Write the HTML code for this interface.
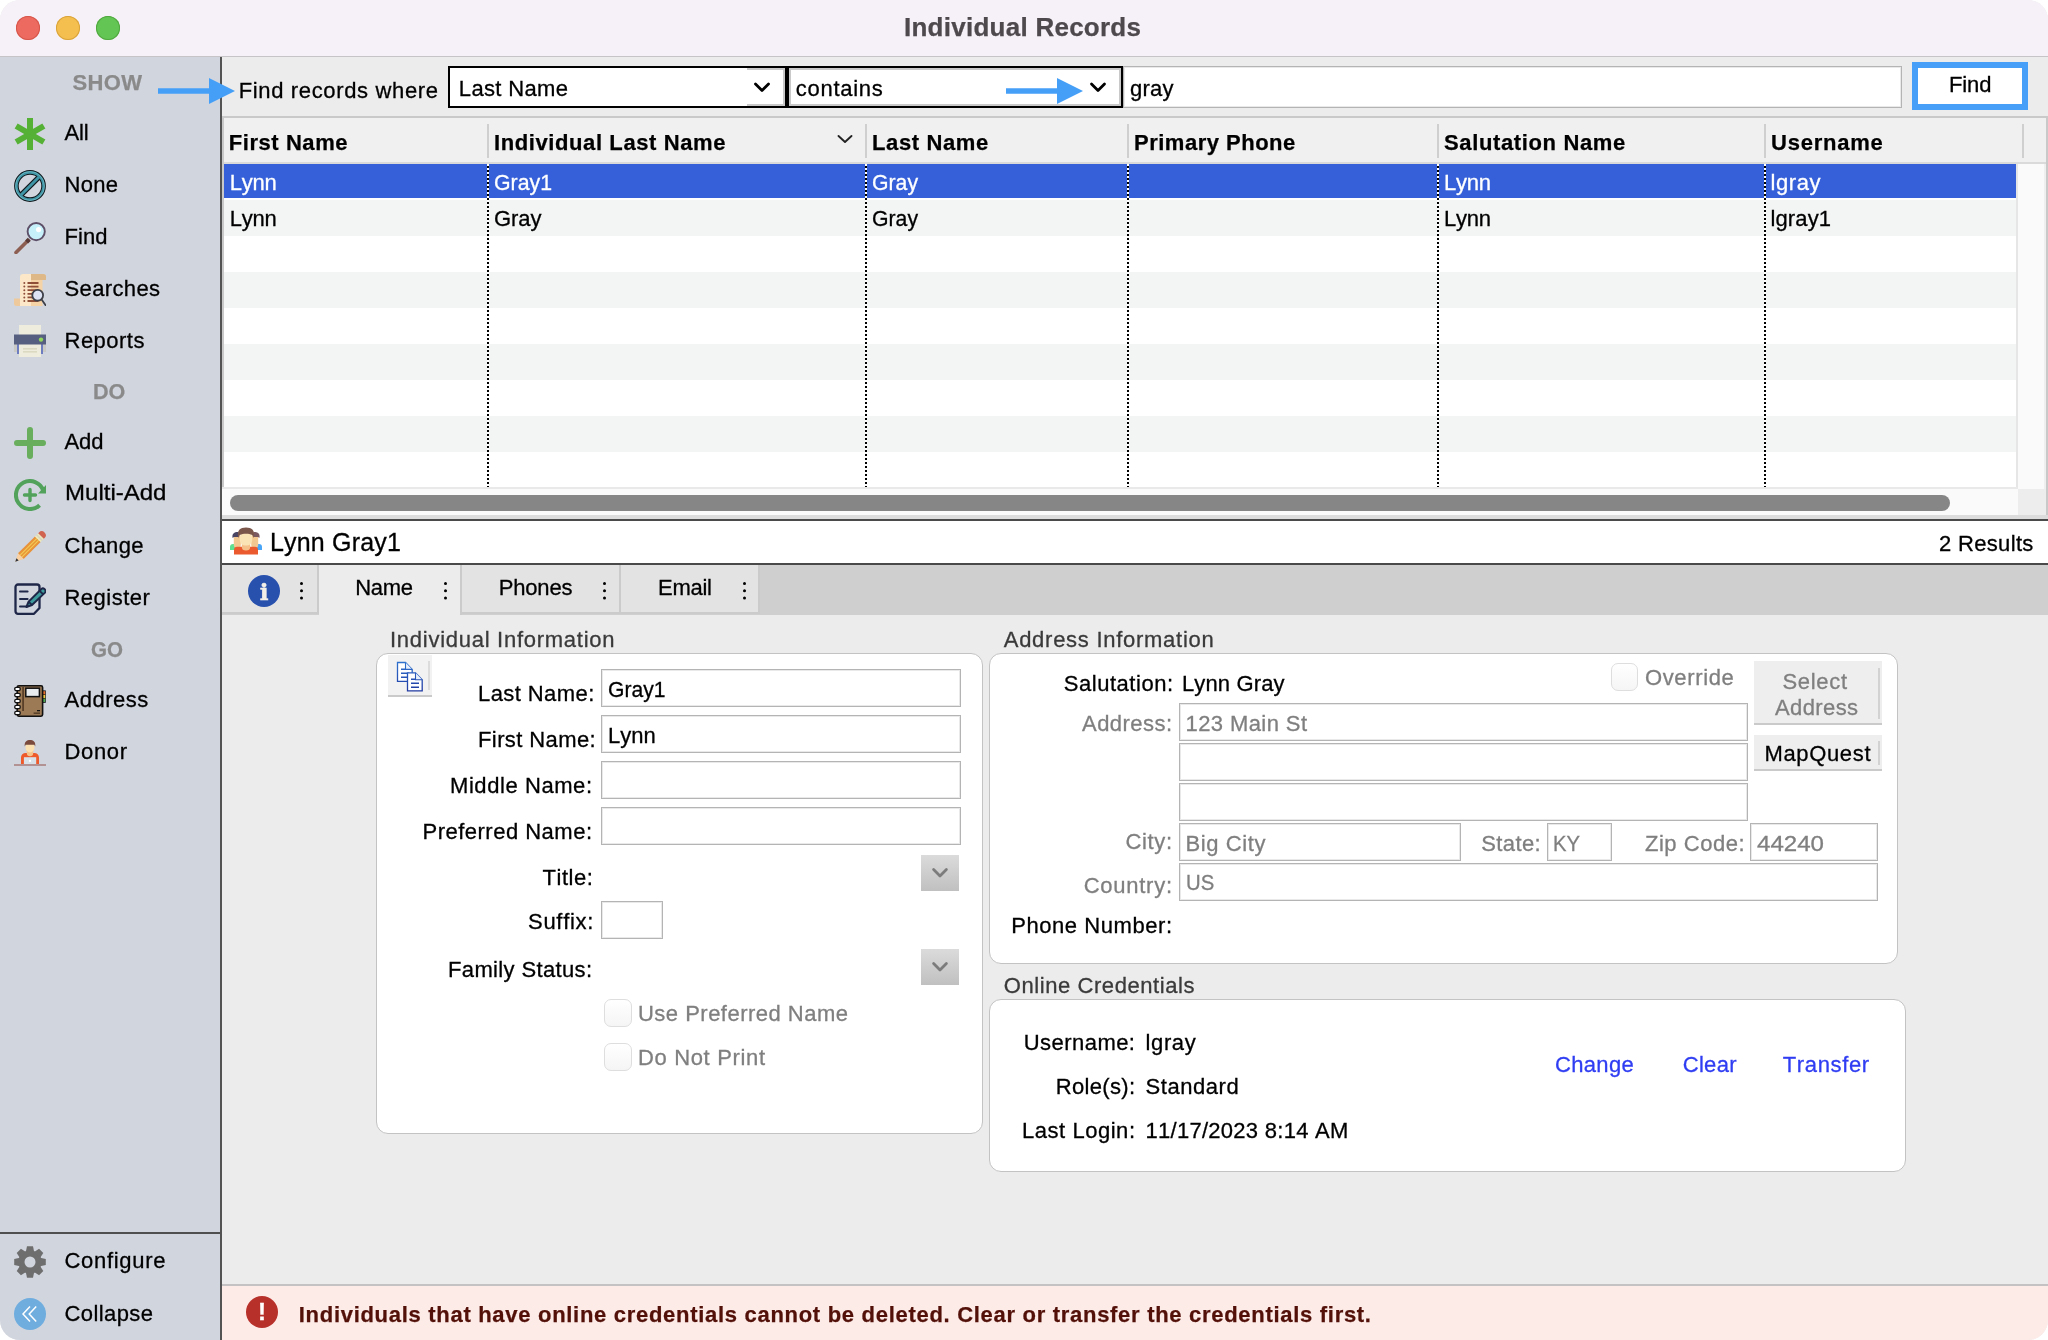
<!DOCTYPE html>
<html lang="en">
<head>
<meta charset="utf-8">
<title>Individual Records</title>
<style>
*{box-sizing:border-box;margin:0;padding:0}
html,body{width:2048px;height:1340px;background:#fff;overflow:hidden}
body{font-family:"Liberation Sans",sans-serif;font-kerning:none;color:#000;position:relative}
#win{position:absolute;left:0;top:0;width:2048px;height:1340px;border-radius:20px;overflow:hidden;background:#ececec}
.a{position:absolute}
.t{position:absolute;white-space:nowrap;font-kerning:none;-webkit-text-stroke:0.3px}
#txt{position:absolute;left:0;top:0;width:2048px;height:1340px;will-change:transform}
#titlebar{left:0;top:0;width:2048px;height:56px;background:#f6f1f8}
#tbline{left:0;top:56px;width:2048px;height:1px;background:#c6c4c6}
.tl{width:24px;height:24px;border-radius:50%;top:16px}
#sidebar{left:0;top:57px;width:220px;height:1283px;background:#d1d5de}
#divider{left:220px;top:57px;width:2px;height:1283px;background:#535353}
#sideline{left:0;top:1232px;width:220px;height:2px;background:#4f4f4f}
.ic{position:absolute;left:14px;width:32px;height:32px}
.combo{background:#fff;border:2px solid #000;height:42px;top:66px}
.inp{position:absolute;background:#fff;border:1px solid #b4b4b4;box-shadow:inset 0 0 0 1px #e9e9e9}
.grp{position:absolute;background:#fff;border:1.5px solid #c3c3c3;border-radius:12px}
.row{position:absolute;left:224px;width:1792px;height:36px}
.vd{position:absolute;top:164px;width:2px;height:323px;background:repeating-linear-gradient(to bottom,#fff 0,#fff 2px,#000 2px,#000 4px)}
.hs{position:absolute;top:124px;width:2px;height:34px;background:#cfcfcf}
.tab{position:absolute;top:565px;height:49px;background:#e3e3e3;border-right:2px solid #cbcbcb;border-bottom:2px solid #cbcbcb}
.dots{position:absolute;width:3px;height:3px;margin:0.3px 0 0 0.3px;background:#000;border-radius:50%;box-shadow:0 7.3px 0 #000,0 14.6px 0 #000}
.cb{position:absolute;width:27.5px;height:27.5px;border:1.5px solid #dedede;border-radius:7px;background:linear-gradient(#fff,#f5f5f5)}
.btn{position:absolute;background:#eeeeee;border-bottom:2px solid #cacaca}
.dd{position:absolute;width:38px;height:36px;background:linear-gradient(#dbdbdb,#c0c0c0)}
</style>
</head>
<body>
<div id="win">
<div id="titlebar" class="a"></div>
<div id="tbline" class="a"></div>
<div class="a tl" style="left:16px;background:#ec6a5f;box-shadow:inset 0 0 0 1px #d5564b"></div>
<div class="a tl" style="left:56px;background:#f5bf4f;box-shadow:inset 0 0 0 1px #d9a33c"></div>
<div class="a tl" style="left:96px;background:#62c554;box-shadow:inset 0 0 0 1px #51a73f"></div>

<div id="sidebar" class="a"></div>
<div id="divider" class="a"></div>
<div id="sideline" class="a"></div>

<!-- find bar -->
<div class="a" style="left:222px;top:116px;width:1824px;height:2px;background:#c9c9c9"></div>
<div class="a combo" style="left:448px;width:339px"></div>
<div class="a" style="left:747px;top:68px;width:38px;height:38px;border:2px solid #c9c9c9;border-left:none"></div>
<div class="a combo" style="left:787px;width:336px;box-shadow:inset 0 0 0 2px #c9c9c9"></div>
<div class="inp" style="left:1123px;top:66px;width:779px;height:42px"></div>
<div class="a" style="left:1912px;top:62px;width:116px;height:48px;background:#fff;border:6px solid #479ff8"></div>
<svg class="a" style="left:750px;top:78px" width="24" height="18" viewBox="0 0 24 18"><path d="M5.5 6 L12 12.5 L18.5 6" fill="none" stroke="#000" stroke-width="2.8" stroke-linecap="round" stroke-linejoin="round"/></svg>
<svg class="a" style="left:1086px;top:78px" width="24" height="18" viewBox="0 0 24 18"><path d="M5.5 6 L12 12.5 L18.5 6" fill="none" stroke="#000" stroke-width="2.8" stroke-linecap="round" stroke-linejoin="round"/></svg>
<!-- blue arrows -->
<svg class="a" style="left:150px;top:74px" width="90" height="34" viewBox="0 0 90 34"><path d="M8 14.2 H59 V4 L85 17 L59 30 V19.800 H8 Z" fill="#469ff7"/></svg>
<svg class="a" style="left:998px;top:74px" width="90" height="34" viewBox="0 0 90 34"><path d="M8 14.2 H59 V4 L85 17 L59 30 V19.800 H8 Z" fill="#469ff7"/></svg>

<!-- table -->
<div class="a" style="left:222px;top:118px;width:1824px;height:44px;background:#f0f0f0"></div>
<div class="a" style="left:222px;top:162px;width:1824px;height:2px;background:#dadada"></div>
<div class="a" style="left:2046px;top:116px;width:2px;height:402px;background:#c9c9c9"></div>
<div class="a" style="left:222px;top:116px;width:2px;height:402px;background:#c9c9c9"></div>
<div class="a" style="left:224px;top:164px;width:1792px;height:323px;background:#fff"></div>
<div class="row" style="top:164px;height:34px;background:#3560d9"></div>
<div class="row" style="top:200px;background:#f3f5f4"></div>
<div class="row" style="top:272px;background:#f3f5f4"></div>
<div class="row" style="top:344px;background:#f3f5f4"></div>
<div class="row" style="top:416px;background:#f3f5f4"></div>
<div class="a" style="left:2016px;top:164px;width:30px;height:354px;background:#fafafa;border-left:2px solid #e6e6e6"></div>
<div class="a" style="left:222px;top:487px;width:1796px;height:31px;background:#fafafa;border-top:2px solid #e9e9e9"></div>
<div class="a" style="left:2018px;top:489px;width:28px;height:29px;background:#ededed"></div>
<div class="a" style="left:2044px;top:164px;width:2px;height:325px;background:#efefef"></div>
<div class="a" style="left:230px;top:495px;width:1720px;height:16px;border-radius:8px;background:#868686"></div>
<div class="a" style="left:222px;top:515px;width:1826px;height:4px;background:#dcdcdc"></div>
<div class="hs" style="left:487px"></div><div class="hs" style="left:865px"></div><div class="hs" style="left:1127px"></div>
<div class="hs" style="left:1437px"></div><div class="hs" style="left:1764px"></div><div class="hs" style="left:2022px"></div>
<div class="vd" style="left:487px"></div><div class="vd" style="left:865px"></div><div class="vd" style="left:1127px"></div>
<div class="vd" style="left:1437px"></div><div class="vd" style="left:1764px"></div>
<svg class="a" style="left:834px;top:130px" width="22" height="18" viewBox="0 0 22 18"><path d="M4.5 6 L11 12 L17.5 6" fill="none" stroke="#222" stroke-width="1.9" stroke-linecap="round" stroke-linejoin="round"/></svg>

<!-- name bar -->
<div class="a" style="left:222px;top:519px;width:1826px;height:2px;background:#4a4a4a"></div>
<div class="a" style="left:222px;top:521px;width:1826px;height:42px;background:#fff"></div>
<div class="a" style="left:222px;top:563px;width:1826px;height:2px;background:#4a4a4a"></div>

<!-- tabs -->
<div class="a" style="left:222px;top:565px;width:1826px;height:50px;background:#cfcfcf"></div>
<div class="tab" style="left:222px;width:97px"></div>
<div class="tab" style="left:319px;width:143px;background:#ececec;border-bottom:none;height:50px"></div>
<div class="tab" style="left:462px;width:159px"></div>
<div class="tab" style="left:621px;width:139px"></div>
<div class="dots" style="left:300px;top:581.7px"></div>
<div class="dots" style="left:444px;top:581.7px"></div>
<div class="dots" style="left:603px;top:581.7px"></div>
<div class="dots" style="left:743px;top:581.7px"></div>
<svg class="a" style="left:248px;top:575px;will-change:transform" width="32" height="32" viewBox="0 0 32 32"><circle cx="16" cy="16" r="16" fill="#2851ae"/><text x="16.2" y="24.700" font-family="DejaVu Serif,Liberation Serif,serif" font-weight="bold" font-size="23" fill="#f2efe8" stroke="#f2efe8" stroke-width="0.5" text-anchor="middle">i</text></svg>

<!-- groups -->
<div class="grp" style="left:376px;top:653px;width:607px;height:481px"></div>
<div class="grp" style="left:989px;top:653px;width:909px;height:311px"></div>
<div class="grp" style="left:989px;top:999px;width:917px;height:173px"></div>

<!-- individual form -->
<div class="btn" style="left:388px;top:655px;width:44px;height:42px;background:#f2f2f2"></div>
<div class="a" style="left:428px;top:661px;width:2px;height:29px;background:#dcdcdc"></div>
<div class="inp" style="left:601px;top:669px;width:360px;height:38px"></div>
<div class="inp" style="left:601px;top:715px;width:360px;height:38px"></div>
<div class="inp" style="left:601px;top:761px;width:360px;height:38px"></div>
<div class="inp" style="left:601px;top:807px;width:360px;height:38px"></div>
<div class="inp" style="left:601px;top:901px;width:62px;height:38px"></div>
<div class="dd" style="left:921px;top:855px"></div>
<div class="dd" style="left:921px;top:949px"></div>
<svg class="a" style="left:929px;top:863px" width="22" height="18" viewBox="0 0 22 18"><path d="M4.600 6.600 L11 13 L17.400 6.600" fill="none" stroke="#7c7c7c" stroke-width="2.800" stroke-linecap="round" stroke-linejoin="round"/></svg>
<svg class="a" style="left:929px;top:956.500px" width="22" height="18" viewBox="0 0 22 18"><path d="M4.600 6.600 L11 13 L17.400 6.600" fill="none" stroke="#7c7c7c" stroke-width="2.800" stroke-linecap="round" stroke-linejoin="round"/></svg>
<div class="cb" style="left:604px;top:999px"></div>
<div class="cb" style="left:604px;top:1043px"></div>

<!-- address form -->
<div class="cb" style="left:1610.5px;top:663px"></div>
<div class="inp" style="left:1179px;top:703px;width:569px;height:38px"></div>
<div class="inp" style="left:1179px;top:743px;width:569px;height:38px"></div>
<div class="inp" style="left:1179px;top:783px;width:569px;height:38px"></div>
<div class="inp" style="left:1179px;top:823px;width:282px;height:38px"></div>
<div class="inp" style="left:1547px;top:823px;width:65px;height:38px"></div>
<div class="inp" style="left:1750px;top:823px;width:128px;height:38px"></div>
<div class="inp" style="left:1179px;top:863px;width:699px;height:38px"></div>
<div class="btn" style="left:1754px;top:661px;width:128px;height:64px"></div>
<div class="a" style="left:1878px;top:668px;width:2px;height:51px;background:#d2d2d2"></div>
<div class="btn" style="left:1754px;top:735px;width:128px;height:36px"></div>
<div class="a" style="left:1878px;top:741px;width:2px;height:24px;background:#d2d2d2"></div>

<!-- error bar -->
<div class="a" style="left:222px;top:1284px;width:1826px;height:2px;background:#c4c2c2"></div>
<div class="a" style="left:222px;top:1286px;width:1826px;height:54px;background:#fdebe8"></div>
<svg class="a" style="left:246px;top:1296px;will-change:transform" width="32" height="32" viewBox="0 0 32 32"><circle cx="16" cy="16" r="16" fill="#b8302a"/><text x="16" y="24.4" font-family="Liberation Sans,sans-serif" font-weight="bold" font-size="24" fill="#fff" stroke="#fff" stroke-width="0.35" stroke-linejoin="round" text-anchor="middle">!</text></svg>

<!-- sidebar icons -->
<svg class="ic" style="top:118px" viewBox="0 0 32 32"><g fill="#55b135"><rect x="13" y="0" width="6" height="32"/><rect x="13" y="0" width="6" height="32" transform="rotate(60 16 16)"/><rect x="13" y="0" width="6" height="32" transform="rotate(-60 16 16)"/></g></svg>
<svg class="ic" style="top:170px" viewBox="0 0 32 32"><circle cx="16" cy="16" r="13.6" fill="none" stroke="#10181c" stroke-width="4.6"/><path d="M6.8 25.2 L25.2 6.8" stroke="#10181c" stroke-width="5.2"/><circle cx="16" cy="16" r="13.6" fill="none" stroke="#3f95a5" stroke-width="2.6"/><path d="M7 25 L25 7" stroke="#3f95a5" stroke-width="3"/><circle cx="16" cy="16" r="14.4" fill="none" stroke="#9fd8e0" stroke-width="0.6" opacity=".7"/></svg>
<svg class="ic" style="top:222px" viewBox="0 0 32 32"><path d="M14 18.6 L2 30.6" stroke="#8d5f52" stroke-width="3.6" stroke-linecap="round"/><path d="M15.3 17.3 L12.6 20" stroke="#5a3a36" stroke-width="4.2"/><circle cx="22.2" cy="9.6" r="8.6" fill="#c6f1fb" stroke="#5d5068" stroke-width="1.9"/><circle cx="24.6" cy="7.6" r="2.6" fill="#fff"/></svg>
<svg class="ic" style="top:274px" viewBox="0 0 32 32"><path d="M9 0 H17 V32 H3 V26 H6 V3 a3 3 0 0 1 3 -3 Z" fill="#fce8c9"/><rect x="17" y="0" width="11.5" height="32" fill="#f6d3a6"/><path d="M17 0 H29.5 a2.5 2.5 0 0 1 2.5 2.5 V6 H17 Z" fill="#deb887"/><path d="M0 24.5 H6 V32 H2.5 A2.5 2.5 0 0 1 0 29.5 Z" fill="#eec99b"/><g stroke="#8e4e38" stroke-width="1.8"><path d="M13.5 9 H24.5 M13.5 12.6 H24.5 M13.5 16.2 H24.5 M13.5 19.8 H24.5 M13.5 23.4 H24.5 M13.5 27 H24.5"/></g><g fill="#8e4e38"><circle cx="10.3" cy="9" r="1"/><circle cx="10.3" cy="12.6" r="1"/><circle cx="10.3" cy="16.2" r="1"/><circle cx="10.3" cy="19.8" r="1"/><circle cx="10.3" cy="23.4" r="1"/><circle cx="10.3" cy="27" r="1"/></g><path d="M27.6 25.6 L31.6 31.2" stroke="#3d4048" stroke-width="1.8" stroke-linecap="round"/><circle cx="23.7" cy="21.2" r="5.4" fill="#dde3f3" stroke="#3d4048" stroke-width="1.8"/></svg>
<svg class="ic" style="top:325px" viewBox="0 0 32 32"><rect x="5" y="0" width="22" height="11" fill="#eeecdc"/><rect x="0" y="19" width="3.6" height="8" fill="#c9c9c5"/><rect x="28.4" y="19" width="3.6" height="8" fill="#c9c9c5"/><rect x="3" y="19" width="2.2" height="10" fill="#6e7cc0"/><rect x="26.8" y="19" width="2.2" height="10" fill="#6e7cc0"/><rect x="5" y="19" width="22" height="13" fill="#eeecdc"/><rect x="9" y="23" width="14" height="1.6" fill="#dcd9c2"/><rect x="9" y="26" width="14" height="1.6" fill="#dcd9c2"/><rect x="0" y="9.5" width="32" height="10" fill="#565f80"/><circle cx="27" cy="14.6" r="2.2" fill="#92d65c"/></svg>
<svg class="ic" style="top:427px" viewBox="0 0 32 32"><path d="M16 3 V29 M3 16 H29" stroke="#68ae5c" stroke-width="6" stroke-linecap="round"/></svg>
<svg class="ic" style="top:479px" viewBox="0 0 32 32"><path d="M25.6 26.2 A14 14 0 1 1 29.2 11.5" fill="none" stroke="#52a25c" stroke-width="4"/><path d="M32 6 V14.6 H24 Z" fill="#52a25c"/><path d="M16 10.5 V21.5 M10.5 16 H21.5" stroke="#52a25c" stroke-width="3.4" stroke-linecap="round"/></svg>
<svg class="ic" style="top:531px;overflow:visible" viewBox="0 0 32 32"><g transform="rotate(-45 16 16)"><rect x="3" y="12" width="24" height="8" fill="#e8923a"/><rect x="3" y="14.2" width="24" height="1.1" fill="#f2cf55"/><rect x="3" y="16.8" width="24" height="1.1" fill="#f2cf55"/><path d="M3 12 L-4.8 16 L3 20 Z" fill="#f8d0a2"/><path d="M-4.8 16 L-1.6 14.36 V17.64 Z" fill="#30343c"/><rect x="27" y="12" width="4.6" height="8" fill="#efe9b8"/><rect x="28.6" y="12" width="1.3" height="8" fill="#d5d3c4"/><path d="M31.6 12 H32.6 A4 4 0 0 1 32.6 20 H31.6 Z" fill="#d0644f"/></g></svg>
<svg class="ic" style="top:583px" viewBox="0 0 32 32"><path d="M4 1.5 H23 a2.5 2.5 0 0 1 2.5 2.5 V25 L20 30.8 H4 a2.5 2.5 0 0 1 -2.5 -2.5 V4 A2.5 2.5 0 0 1 4 1.5 Z" fill="none" stroke="#1e2748" stroke-width="2.3" stroke-linejoin="round"/><path d="M6 8.6 H13.6 M6 16 H13.6 M6 23.6 H13" stroke="#1e2748" stroke-width="2" stroke-linecap="round"/><path d="M12.4 24 L14.6 18.6 L27.4 6 a2.2 2.2 0 0 1 3 0 L31 6.6 a2.2 2.2 0 0 1 0 3 L18 22 Z" fill="#3d9a9c" stroke="#1e2748" stroke-width="2" stroke-linejoin="round"/><path d="M14.6 18.6 L18 22" stroke="#1e2748" stroke-width="1.8"/><path d="M25.6 7.8 L29 11.2" stroke="#1e2748" stroke-width="1.8"/></svg>
<svg class="ic" style="top:685px" viewBox="0 0 32 32"><rect x="28" y="5.4" width="3.8" height="12.4" fill="#111"/><rect x="28.4" y="6.2" width="2.8" height="3.2" fill="#e8702e"/><rect x="28.4" y="10" width="2.8" height="3.2" fill="#f0c840"/><rect x="28.4" y="13.8" width="2.8" height="3.2" fill="#4aa850"/><rect x="3.2" y="0.8" width="25.4" height="30.4" rx="1.6" fill="#9c7a55" stroke="#111" stroke-width="1.6"/><rect x="8.2" y="2" width="1.8" height="24" fill="#5a4028"/><rect x="11.8" y="3.2" width="13.6" height="8.4" fill="#e8ecef" stroke="#111" stroke-width="1.5"/><rect x="23" y="25" width="3" height="1.3" fill="#111"/><rect x="19.6" y="27.5" width="6.4" height="1.3" fill="#4a3420"/><g fill="#fff" stroke="#111" stroke-width="1.3"><rect x="0.7" y="2.3" width="5.6" height="3.4" rx="1.6"/><rect x="0.7" y="8.3" width="5.6" height="3.4" rx="1.6"/><rect x="0.7" y="14.3" width="5.6" height="3.4" rx="1.6"/><rect x="0.7" y="20.3" width="5.6" height="3.4" rx="1.6"/><rect x="0.7" y="26.3" width="5.6" height="3.4" rx="1.6"/></g></svg>
<svg class="ic" style="top:736px" viewBox="0 0 32 32"><path d="M7 28 V21.5 a4.6 4.6 0 0 1 4.6 -4.6 H20.4 a4.6 4.6 0 0 1 4.6 4.6 V28 Z" fill="#ee5a2a"/><path d="M12.8 14 H19.2 V17 a3.2 3.2 0 0 1 -6.4 0 Z" fill="#f5c48c"/><ellipse cx="16" cy="11.4" rx="4.5" ry="5" fill="#fbe0b0"/><path d="M10.8 10.6 C10 5.6 13 4 16 4 C19 4 22 5.6 21.2 10.6 L20.4 8.8 C18 8.6 14 8.6 11.6 8.8 Z" fill="#7a4a3c"/><rect x="9.9" y="21.2" width="12.3" height="6.8" fill="#d8e0e8"/><rect x="15" y="23.8" width="2" height="2" fill="#fff"/><rect x="0" y="28" width="32" height="2" fill="#b29292"/></svg>
<svg class="ic" style="top:1246px" viewBox="0 0 32 32"><g fill="#6e6e6e"><circle cx="16" cy="16" r="11.6"/><g transform="rotate(0 16 16)"><path d="M13 0.2 H19 L20.2 6 H11.8 Z"/><path d="M13 31.8 H19 L20.2 26 H11.8 Z"/></g><g transform="rotate(45 16 16)"><path d="M13 0.2 H19 L20.2 6 H11.8 Z"/><path d="M13 31.8 H19 L20.2 26 H11.8 Z"/></g><g transform="rotate(90 16 16)"><path d="M13 0.2 H19 L20.2 6 H11.8 Z"/><path d="M13 31.8 H19 L20.2 26 H11.8 Z"/></g><g transform="rotate(135 16 16)"><path d="M13 0.2 H19 L20.2 6 H11.8 Z"/><path d="M13 31.8 H19 L20.2 26 H11.8 Z"/></g></g><circle cx="16" cy="16" r="5.5" fill="#d1d5de"/></svg>
<svg class="ic" style="top:1298px" viewBox="0 0 32 32"><circle cx="16" cy="16" r="16" fill="#6fadde"/><path d="M16 8.4 L9 16 L16 23.6 M22.2 8.4 L15.2 16 L22.2 23.6" fill="none" stroke="#fff" stroke-width="1.5"/></svg>
<!-- people icon -->
<svg class="a" style="left:229px;top:526px" width="34" height="30" viewBox="0 0 34 30"><path d="M1 24 V21 a3 3 0 0 1 3 -3 H8 V24 Z" fill="#5fe090"/><path d="M33 24 V21 a3 3 0 0 0 -3 -3 H26 V24 Z" fill="#48a5f8"/><rect x="4.8" y="9" width="7" height="13" rx="3" fill="#f3c890"/><rect x="22.2" y="9" width="7" height="13" rx="3" fill="#f3c890"/><path d="M3.6 12 C2.6 7.4 5.6 5.8 9.4 6 V11 H5 Z" fill="#4a4562"/><path d="M30.4 12 C31.4 7.400 28.4 5.800 24.600 6 V11 H29 Z" fill="#7a5a60"/><path d="M5 28.400 V24 a3.200 3.200 0 0 1 3.200 -3.200 H25.800 a3.200 3.200 0 0 1 3.200 3.200 V28.400 Z" fill="#ea5a2e"/><path d="M12.800 18 H21.200 V21 a4.200 3.600 0 0 1 -8.400 0 Z" fill="#f5c08a"/><rect x="10.800" y="6" width="12.400" height="13.600" rx="5.600" fill="#fae3b5"/><path d="M9.400 12 C7.400 4.400 11.400 1.600 17 1.600 C22.600 1.600 26.600 4.400 24.600 12 L23.200 9 C20 7.400 14 7.400 10.800 9 Z" fill="#7a554a"/></svg>
<!-- copy icon -->
<svg class="a" style="left:396px;top:661px" width="28" height="31" viewBox="0 0 28 31"><linearGradient id="cg" x1="0" y1="0" x2="0" y2="31" gradientUnits="userSpaceOnUse"><stop offset="0" stop-color="#2f74d0"/><stop offset="1" stop-color="#2038a0"/></linearGradient><path d="M1.500 1.500 H9.500 L16.200 8.400 V20.400 H1.500 Z" fill="#fff" stroke="url(#cg)" stroke-width="1.300"/><path d="M9.500 1.500 V8.400 H16.200" fill="#e6effc" stroke="url(#cg)" stroke-width="1.100"/><path d="M5 8.200 H9.500 M5 12.200 H13 M5 16.200 H13" stroke="url(#cg)" stroke-width="1.500"/><path d="M11.500 11.800 H19.500 L26.200 18.700 V29.800 H11.500 Z" fill="#fff" stroke="url(#cg)" stroke-width="1.300"/><path d="M19.500 11.800 V18.700 H26.200" fill="#e6effc" stroke="url(#cg)" stroke-width="1.100"/><path d="M15 18.300 H19.500 M15 22.300 H23 M15 26.300 H23" stroke="url(#cg)" stroke-width="1.500"/></svg>

<div id="txt">
<span class="t" style="left:904.00px;top:14.49px;font-size:26px;line-height:26px;letter-spacing:0.257px;font-weight:bold;-webkit-text-stroke:0.25px;color:#4d494d;">Individual Records</span>
<span class="t" style="left:72.50px;top:72.28px;font-size:22px;line-height:22px;letter-spacing:0.354px;font-weight:bold;-webkit-text-stroke:0.25px;color:#8a8a8a;">SHOW</span>
<span class="t" style="left:93.00px;top:381.28px;font-size:22px;line-height:22px;letter-spacing:0.000px;font-weight:bold;-webkit-text-stroke:0.25px;color:#8a8a8a;transform:scaleX(0.9818);transform-origin:0 0;">DO</span>
<span class="t" style="left:91.00px;top:639.28px;font-size:22px;line-height:22px;letter-spacing:0.000px;font-weight:bold;-webkit-text-stroke:0.25px;color:#8a8a8a;transform:scaleX(0.9343);transform-origin:0 0;">GO</span>
<span class="t" style="left:64.50px;top:122.28px;font-size:22px;line-height:22px;letter-spacing:-0.094px;">All</span>
<span class="t" style="left:64.50px;top:174.28px;font-size:22px;line-height:22px;letter-spacing:0.292px;">None</span>
<span class="t" style="left:64.50px;top:226.28px;font-size:22px;line-height:22px;letter-spacing:0.062px;">Find</span>
<span class="t" style="left:64.50px;top:278.28px;font-size:22px;line-height:22px;letter-spacing:0.366px;">Searches</span>
<span class="t" style="left:64.50px;top:329.78px;font-size:22px;line-height:22px;letter-spacing:0.490px;">Reports</span>
<span class="t" style="left:64.50px;top:430.68px;font-size:22px;line-height:22px;letter-spacing:-0.112px;">Add</span>
<span class="t" style="left:64.50px;top:482.28px;font-size:22px;line-height:22px;letter-spacing:0.000px;transform:scaleX(1.0921);transform-origin:0 0;">Multi-Add</span>
<span class="t" style="left:64.50px;top:534.68px;font-size:22px;line-height:22px;letter-spacing:0.407px;">Change</span>
<span class="t" style="left:64.50px;top:586.78px;font-size:22px;line-height:22px;letter-spacing:0.480px;">Register</span>
<span class="t" style="left:64.50px;top:689.28px;font-size:22px;line-height:22px;letter-spacing:0.519px;">Address</span>
<span class="t" style="left:64.50px;top:740.98px;font-size:22px;line-height:22px;letter-spacing:0.641px;">Donor</span>
<span class="t" style="left:64.50px;top:1249.78px;font-size:22px;line-height:22px;letter-spacing:0.703px;">Configure</span>
<span class="t" style="left:64.50px;top:1303.28px;font-size:22px;line-height:22px;letter-spacing:0.411px;">Collapse</span>
<span class="t" style="left:238.75px;top:80.28px;font-size:22px;line-height:22px;letter-spacing:0.643px;">Find records where</span>
<span class="t" style="left:458.80px;top:78.28px;font-size:22px;line-height:22px;letter-spacing:0.353px;">Last Name</span>
<span class="t" style="left:795.75px;top:78.28px;font-size:22px;line-height:22px;letter-spacing:0.723px;">contains</span>
<span class="t" style="left:1130.00px;top:78.28px;font-size:22px;line-height:22px;letter-spacing:0.229px;">gray</span>
<span class="t" style="left:1949.00px;top:73.78px;font-size:22px;line-height:22px;letter-spacing:-0.104px;">Find</span>
<span class="t" style="left:228.80px;top:131.78px;font-size:22px;line-height:22px;letter-spacing:0.557px;font-weight:bold;-webkit-text-stroke:0.25px;">First Name</span>
<span class="t" style="left:494.00px;top:131.78px;font-size:22px;line-height:22px;letter-spacing:0.597px;font-weight:bold;-webkit-text-stroke:0.25px;">Individual Last Name</span>
<span class="t" style="left:872.00px;top:131.78px;font-size:22px;line-height:22px;letter-spacing:0.625px;font-weight:bold;-webkit-text-stroke:0.25px;">Last Name</span>
<span class="t" style="left:1134.00px;top:131.78px;font-size:22px;line-height:22px;letter-spacing:0.500px;font-weight:bold;-webkit-text-stroke:0.25px;">Primary Phone</span>
<span class="t" style="left:1444.00px;top:131.78px;font-size:22px;line-height:22px;letter-spacing:0.634px;font-weight:bold;-webkit-text-stroke:0.25px;">Salutation Name</span>
<span class="t" style="left:1771.00px;top:131.78px;font-size:22px;line-height:22px;letter-spacing:0.768px;font-weight:bold;-webkit-text-stroke:0.25px;">Username</span>
<span class="t" style="left:229.70px;top:171.98px;font-size:22px;line-height:22px;letter-spacing:-0.225px;color:#fff;">Lynn</span>
<span class="t" style="left:494.00px;top:171.98px;font-size:22px;line-height:22px;letter-spacing:0.000px;color:#fff;transform:scaleX(0.9677);transform-origin:0 0;">Gray1</span>
<span class="t" style="left:872.00px;top:171.98px;font-size:22px;line-height:22px;letter-spacing:0.000px;color:#fff;transform:scaleX(0.9646);transform-origin:0 0;">Gray</span>
<span class="t" style="left:1444.00px;top:171.98px;font-size:22px;line-height:22px;letter-spacing:-0.208px;color:#fff;">Lynn</span>
<span class="t" style="left:1770.50px;top:171.98px;font-size:22px;line-height:22px;letter-spacing:0.578px;color:#fff;">lgray</span>
<span class="t" style="left:229.70px;top:207.98px;font-size:22px;line-height:22px;letter-spacing:-0.225px;">Lynn</span>
<span class="t" style="left:494.00px;top:207.98px;font-size:22px;line-height:22px;letter-spacing:-0.096px;">Gray</span>
<span class="t" style="left:872.00px;top:207.98px;font-size:22px;line-height:22px;letter-spacing:0.000px;transform:scaleX(0.9646);transform-origin:0 0;">Gray</span>
<span class="t" style="left:1444.00px;top:207.98px;font-size:22px;line-height:22px;letter-spacing:-0.208px;">Lynn</span>
<span class="t" style="left:1770.50px;top:207.98px;font-size:22px;line-height:22px;letter-spacing:0.113px;">lgray1</span>
<span class="t" style="left:270.00px;top:530.24px;font-size:25px;line-height:25px;letter-spacing:0.188px;">Lynn Gray1</span>
<span class="t" style="left:1939.00px;top:533.28px;font-size:22px;line-height:22px;letter-spacing:0.327px;">2 Results</span>
<span class="t" style="left:355.30px;top:576.78px;font-size:22px;line-height:22px;letter-spacing:-0.329px;">Name</span>
<span class="t" style="left:498.75px;top:576.78px;font-size:22px;line-height:22px;letter-spacing:-0.175px;">Phones</span>
<span class="t" style="left:658.00px;top:576.78px;font-size:22px;line-height:22px;letter-spacing:-0.250px;">Email</span>
<span class="t" style="left:390.00px;top:629.28px;font-size:22px;line-height:22px;letter-spacing:0.732px;color:#3a3a3a;">Individual Information</span>
<span class="t" style="left:1003.75px;top:628.78px;font-size:22px;line-height:22px;letter-spacing:0.729px;color:#3a3a3a;">Address Information</span>
<span class="t" style="left:1003.75px;top:974.78px;font-size:22px;line-height:22px;letter-spacing:0.574px;color:#3a3a3a;">Online Credentials</span>
<span class="t" style="left:478.00px;top:682.78px;font-size:22px;line-height:22px;letter-spacing:0.417px;">Last Name:</span>
<span class="t" style="left:478.00px;top:729.03px;font-size:22px;line-height:22px;letter-spacing:0.406px;">First Name:</span>
<span class="t" style="left:450.00px;top:774.78px;font-size:22px;line-height:22px;letter-spacing:0.574px;">Middle Name:</span>
<span class="t" style="left:422.50px;top:821.03px;font-size:22px;line-height:22px;letter-spacing:0.491px;">Preferred Name:</span>
<span class="t" style="left:542.50px;top:866.78px;font-size:22px;line-height:22px;letter-spacing:0.525px;">Title:</span>
<span class="t" style="left:528.00px;top:911.03px;font-size:22px;line-height:22px;letter-spacing:0.708px;">Suffix:</span>
<span class="t" style="left:448.00px;top:958.53px;font-size:22px;line-height:22px;letter-spacing:0.356px;">Family Status:</span>
<span class="t" style="left:608.00px;top:678.53px;font-size:22px;line-height:22px;letter-spacing:0.000px;transform:scaleX(0.9593);transform-origin:0 0;">Gray1</span>
<span class="t" style="left:608.00px;top:724.78px;font-size:22px;line-height:22px;letter-spacing:0.042px;">Lynn</span>
<span class="t" style="left:638.00px;top:1002.88px;font-size:22px;line-height:22px;letter-spacing:0.485px;color:#7f7f7f;">Use Preferred Name</span>
<span class="t" style="left:638.00px;top:1046.68px;font-size:22px;line-height:22px;letter-spacing:0.653px;color:#7f7f7f;">Do Not Print</span>
<span class="t" style="left:1063.75px;top:672.58px;font-size:22px;line-height:22px;letter-spacing:0.531px;">Salutation:</span>
<span class="t" style="left:1182.00px;top:672.58px;font-size:22px;line-height:22px;letter-spacing:0.133px;">Lynn Gray</span>
<span class="t" style="left:1645.00px;top:667.28px;font-size:22px;line-height:22px;letter-spacing:0.625px;color:#7f7f7f;">Override</span>
<span class="t" style="left:1082.00px;top:712.78px;font-size:22px;line-height:22px;letter-spacing:0.455px;color:#7f7f7f;">Address:</span>
<span class="t" style="left:1185.50px;top:712.78px;font-size:22px;line-height:22px;letter-spacing:0.412px;color:#7f7f7f;">123 Main St</span>
<span class="t" style="left:1125.50px;top:831.03px;font-size:22px;line-height:22px;letter-spacing:0.625px;color:#7f7f7f;">City:</span>
<span class="t" style="left:1185.50px;top:832.88px;font-size:22px;line-height:22px;letter-spacing:0.598px;color:#7f7f7f;">Big City</span>
<span class="t" style="left:1481.25px;top:832.88px;font-size:22px;line-height:22px;letter-spacing:0.400px;color:#7f7f7f;">State:</span>
<span class="t" style="left:1553.00px;top:832.88px;font-size:22px;line-height:22px;letter-spacing:0.000px;color:#7f7f7f;transform:scaleX(0.9191);transform-origin:0 0;">KY</span>
<span class="t" style="left:1645.00px;top:832.88px;font-size:22px;line-height:22px;letter-spacing:0.516px;color:#7f7f7f;">Zip Code:</span>
<span class="t" style="left:1757.00px;top:832.88px;font-size:22px;line-height:22px;letter-spacing:0.000px;color:#7f7f7f;transform:scaleX(1.0950);transform-origin:0 0;">44240</span>
<span class="t" style="left:1083.75px;top:874.78px;font-size:22px;line-height:22px;letter-spacing:0.732px;color:#7f7f7f;">Country:</span>
<span class="t" style="left:1185.50px;top:871.78px;font-size:22px;line-height:22px;letter-spacing:0.000px;color:#7f7f7f;transform:scaleX(0.9243);transform-origin:0 0;">US</span>
<span class="t" style="left:1011.25px;top:914.78px;font-size:22px;line-height:22px;letter-spacing:0.557px;">Phone Number:</span>
<span class="t" style="left:1782.50px;top:670.98px;font-size:22px;line-height:22px;letter-spacing:0.675px;color:#7f7f7f;">Select</span>
<span class="t" style="left:1775.00px;top:697.08px;font-size:22px;line-height:22px;letter-spacing:0.385px;color:#7f7f7f;">Address</span>
<span class="t" style="left:1764.50px;top:742.78px;font-size:22px;line-height:22px;letter-spacing:0.643px;">MapQuest</span>
<span class="t" style="left:1023.75px;top:1032.28px;font-size:22px;line-height:22px;letter-spacing:0.453px;">Username:</span>
<span class="t" style="left:1145.50px;top:1032.28px;font-size:22px;line-height:22px;letter-spacing:0.641px;">lgray</span>
<span class="t" style="left:1055.75px;top:1076.03px;font-size:22px;line-height:22px;letter-spacing:0.321px;">Role(s):</span>
<span class="t" style="left:1145.50px;top:1076.03px;font-size:22px;line-height:22px;letter-spacing:0.562px;">Standard</span>
<span class="t" style="left:1022.00px;top:1119.78px;font-size:22px;line-height:22px;letter-spacing:0.537px;">Last Login:</span>
<span class="t" style="left:1145.50px;top:1119.78px;font-size:22px;line-height:22px;letter-spacing:0.276px;">11/17/2023 8:14 AM</span>
<span class="t" style="left:1555.00px;top:1053.53px;font-size:22px;line-height:22px;letter-spacing:0.338px;color:#2f3df2;">Change</span>
<span class="t" style="left:1682.75px;top:1053.53px;font-size:22px;line-height:22px;letter-spacing:0.297px;color:#2f3df2;">Clear</span>
<span class="t" style="left:1782.75px;top:1053.53px;font-size:22px;line-height:22px;letter-spacing:0.634px;color:#2f3df2;">Transfer</span>
<span class="t" style="left:298.80px;top:1304.28px;font-size:22px;line-height:22px;letter-spacing:0.704px;font-weight:bold;-webkit-text-stroke:0.25px;color:#521009;">Individuals that have online credentials cannot be deleted. Clear or transfer the credentials first.</span>
</div>
</div>
</body>
</html>
